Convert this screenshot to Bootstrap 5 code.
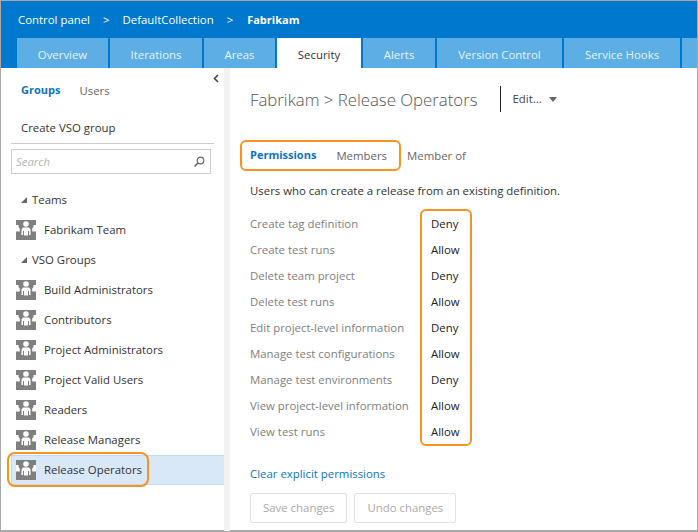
<!DOCTYPE html>
<html lang="en">
<head>
    <meta charset="UTF-8">
    <meta name="viewport" content="width=device-width, initial-scale=1.0">
    <title>Fabrikam Security</title>
    <link href="https://cdn.jsdelivr.net/npm/bootstrap@5.3.0/dist/css/bootstrap.min.css" rel="stylesheet">
    <style>
        html, body { height: 100%; }
        body { font-family: "Open Sans", "Noto Sans", sans-serif; font-size: 11.4px; color: #222; background: #fff; overflow: hidden; }
        .shell { width: 698px; height: 532px; border: 1px solid #a9a9a9; border-bottom-width: 2px; position: relative; }
        .top-head { background: #0078cd; height: 67px; padding-left: 16px; }
        .crumbs { height: 37px; color: #fff; gap: 13px; padding: 1px 0 0 1px; }
        .crumbs b { font-weight: 700; font-size: 11px; margin-left: 1px; }
        .tabs-strip { gap: 2px; height: 30px; overflow: hidden; }
        .tab-item { background: #5caee5; color: #e4f2fb; height: 30px; font-size: 11.4px; padding-top: 4px; }
        .tab-item.on { background: #fff; color: #333; }
        .sidebar { width: 223px; height: 463px; position: relative; }
        .split { width: 6px; background: #f2f2f2; }
        .collapse-arrow { position: absolute; right: 5px; top: 6px; }
        .side-tabs { padding: 14px 0 0 20px; gap: 19px; height: 44px; color: #666; }
        .tab-on { color: #0a74c4; font-weight: 700; font-size: 11px; }
        .create-link { padding: 7px 0 0 10px; margin: 0 10px; height: 32px; color: #333; border-bottom: 1px solid #ccc; }
        .search-box { margin: 5px 13px 0 10px; height: 25px; border: 1px solid #d0d0d0; padding: 0 5px 0 4px; }
        .search-box span { color: #b5b5b5; font-style: italic; }
        .tree-list { margin-top: 11px; }
        .tree-row { height: 30px; gap: 8px; padding-left: 15px; color: #333; }
        .tree-head { padding-left: 20px; gap: 5px; }
        .tree-row.on { background: #d9e8f9; border: 1px solid #bfdaf6; border-right: 0; margin-left: 10px; padding-left: 4px; }
        .glyph { width: 20px; height: 20px; flex: none; }
        .main-pane { padding: 0 0 0 20px; min-width: 0; }
        .page-title { height: 72px; padding-top: 18px; }
        .page-title h1 { font-size: 16.8px; font-weight: 300; color: #555; margin: 0; padding-top: 4px; }
        .edit-menu { border-left: 1px solid #222; margin-left: 22px; padding-left: 12px; height: 26px; gap: 7px; color: #444; }
        .caret-down { width: 0; height: 0; border: 4px solid transparent; border-top: 5px solid #666; border-bottom: 0; }
        .box-on { border: 2px solid #f7931e; border-radius: 6px; }
        .perm-tabs { margin-left: -10px; padding: 0 10px 0 8px; width: 161px; height: 31px; gap: 20px; color: #666; }
        .member-of { margin-left: 6px; color: #666; }
        .perm-text { margin-top: 8px; height: 24px; color: #333; }
        .perm-lines { margin-top: 6px; width: 222px; }
        .perm-names > div, .perm-vals > div { height: 26px; display: flex; align-items: center; }
        .perm-names { width: 170px; color: #808080; padding-top: 2px; white-space: nowrap; }
        .perm-vals { width: 52px; height: 237px; padding: 0 0 0 9px; color: #222; }
        .clear-link { color: #0a74c4; margin-top: 16px; height: 24px; }
        .btn.btn-off:disabled { height: 30px; border: 1px solid #e2e2e2; border-radius: 2px; color: #aaa; font-size: 11.4px; padding: 0 12px; margin-top: 7px; background: #fff; opacity: 1; }
        .btn-row { gap: 7px; }
        .mark-row { position: absolute; left: 6px; top: 451px; width: 142px; height: 35px; border-radius: 8px; }
    </style>
</head>
<body>

<svg width="0" height="0" class="position-absolute">
    <symbol id="grp" viewBox="0 0 20 20">
        <rect width="20" height="20" fill="#7f7f7f"/>
        <circle cx="10" cy="4" r="2.8" fill="#fff"/>
        <path d="M5.5 15V9.5L7 7.5H13L14.5 9.5V15H13V11H12V15.5H8V11H7V15Z" fill="#fff"/>
        <path d="M0 5H2.5V7L3.8 8.5V11.5H0Z" fill="#fff"/>
        <path d="M20 5H17.5V7L16.2 8.5V11.5H20Z" fill="#fff"/>
    </symbol>
</svg>

<div class="shell">
    <div class="top-head">
        <div class="crumbs d-flex align-items-center">
            <span>Control panel</span><span>&gt;</span><span>DefaultCollection</span><span>&gt;</span><b>Fabrikam</b>
        </div>
        <div class="tabs-strip d-flex" id="tabs"></div>
    </div>
    <div class="d-flex">
        <div class="sidebar">
            <svg class="collapse-arrow" width="6" height="9" viewBox="0 0 6 9"><path d="M5 1L1.5 4.5L5 8" fill="none" stroke="#444" stroke-width="1.6"/></svg>
            <div class="side-tabs d-flex"><span class="tab-on">Groups</span><span>Users</span></div>
            <div class="create-link">Create VSO group</div>
            <div class="search-box d-flex align-items-center justify-content-between">
                <span>Search</span>
                <svg width="12" height="12" viewBox="0 0 12 12"><circle cx="7.5" cy="4.5" r="3.3" fill="none" stroke="#666" stroke-width="1.2"/><path d="M5 7L1.5 10.5" stroke="#666" stroke-width="1.6"/></svg>
            </div>
            <div class="tree-list" id="tree"></div>
        </div>
        <div class="split"></div>
        <div class="main-pane flex-grow-1">
            <div class="page-title d-flex">
                <h1>Fabrikam &gt; Release Operators</h1>
                <div class="edit-menu d-flex align-items-center"><span>Edit...</span><i class="caret-down"></i></div>
            </div>
            <div class="d-flex align-items-center">
                <div class="perm-tabs box-on d-flex align-items-center"><span class="tab-on">Permissions</span><span>Members</span></div>
                <span class="member-of">Member of</span>
            </div>
            <div class="perm-text d-flex align-items-center">Users who can create a release from an existing definition.</div>
            <div class="perm-lines d-flex">
                <div class="perm-names" id="names"></div>
                <div class="perm-vals box-on" id="vals"></div>
            </div>
            <div class="clear-link d-flex align-items-center">Clear explicit permissions</div>
            <div class="btn-row d-flex">
                <button class="btn btn-off" disabled>Save changes</button>
                <button class="btn btn-off" disabled>Undo changes</button>
            </div>
        </div>
    </div>
    <div class="mark-row box-on"></div>
</div>

<script>
    const tabs = [["Overview", 91], ["Iterations", 92], ["Areas", 71], ["Security", 84], ["Alerts", 72], ["Version Control", 125], ["Service Hooks", 116], ["", 20]];
    document.getElementById("tabs").innerHTML = tabs.map(t => `
        <div class="tab-item d-flex align-items-center justify-content-center flex-shrink-0 ${t[0] === "Security" ? "on" : ""}" style="width:${t[1]}px">${t[0]}</div>
    `).join('');

    const tree = ["#Teams", "Fabrikam Team", "#VSO Groups", "Build Administrators", "Contributors", "Project Administrators", "Project Valid Users", "Readers", "Release Managers", "Release Operators"];
    document.getElementById("tree").innerHTML = tree.map(name => {
        if (name[0] === "#") {
            return `<div class="tree-row tree-head d-flex align-items-center"><svg width="6" height="6" viewBox="0 0 6 6"><path d="M6 0V6H0Z" fill="#666"/></svg><span>${name.slice(1)}</span></div>`;
        }
        return `<div class="tree-row d-flex align-items-center ${name === "Release Operators" ? "on" : ""}"><svg class="glyph"><use href="#grp"/></svg><span>${name}</span></div>`;
    }).join('');

    const perms = [["Create tag definition", "Deny"], ["Create test runs", "Allow"], ["Delete team project", "Deny"], ["Delete test runs", "Allow"], ["Edit project-level information", "Deny"], ["Manage test configurations", "Allow"], ["Manage test environments", "Deny"], ["View project-level information", "Allow"], ["View test runs", "Allow"]];
    document.getElementById("names").innerHTML = perms.map(p => `<div>${p[0]}</div>`).join('');
    document.getElementById("vals").innerHTML = perms.map(p => `<div>${p[1]}</div>`).join('');
</script>

</body>
</html>
